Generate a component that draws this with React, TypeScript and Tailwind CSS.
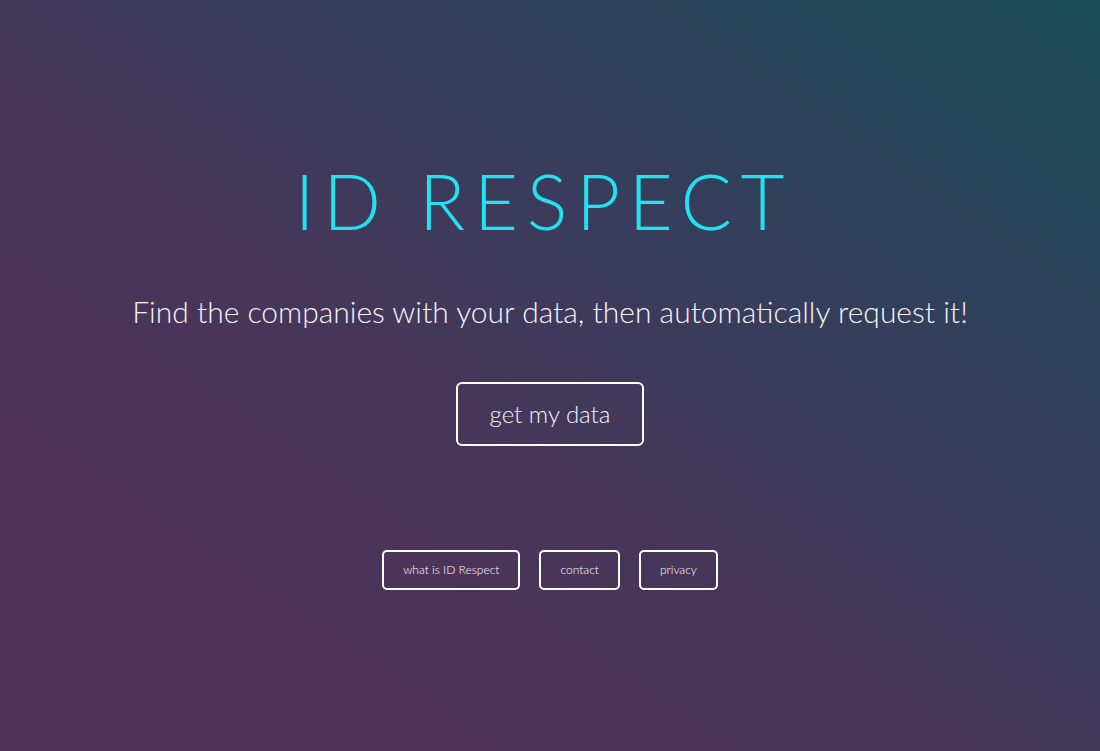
import React from "react";

const links = ["what is ID Respect", "contact", "privacy"];

export default function App() {
  return (
    <div className="min-h-screen w-full bg-[linear-gradient(to_top_right,#53305a_0%,#4b3459_35%,#3a3c5c_62%,#174b57_100%)] flex flex-col items-center font-['Lato','Open_Sans',sans-serif]">
      <h1 className="mt-[157px] pr-[12px] text-[76px] leading-[88px] font-light tracking-[0.115em] text-[#22e1f1]">
        ID RESPECT
      </h1>
      <p className="mt-[46px] text-[30px] leading-[40px] font-light text-[#f5f3f8]">
        Find the companies with your data, then automatically request it!
      </p>
      <button className="mt-[51px] w-[188px] h-[64px] border-2 border-white rounded-[6px] text-[24px] font-light text-[#f5f3f8]">
        get my data
      </button>
      <div className="mt-[104px] flex gap-[19px]">
        {links.map((l) => (
          <button
            key={l}
            className="h-[40px] px-[19px] border-2 border-white rounded-[5px] text-[12px] font-light text-white"
          >
            {l}
          </button>
        ))}
      </div>
    </div>
  );
}
